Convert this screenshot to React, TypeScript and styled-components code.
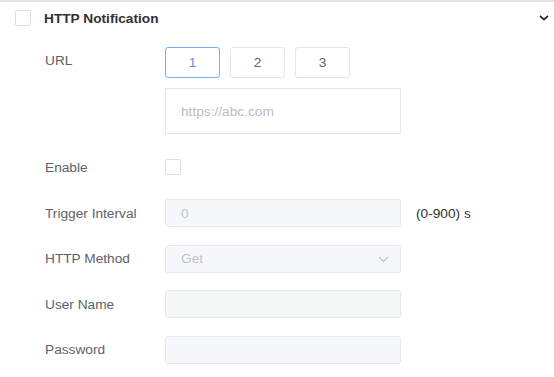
import styled, { createGlobalStyle } from 'styled-components';

const GlobalStyle = createGlobalStyle`
  html, body {
    margin: 0;
    padding: 0;
    background: #fff;
  }
  body {
    font-family: 'Liberation Sans', Arial, sans-serif;
    font-size: 13.7px;
    color: #606266;
  }
`;

const Panel = styled.section`
  width: 554px;
  border-top: 2px solid #e4e4e4;
  box-sizing: border-box;
`;

const Header = styled.div`
  display: flex;
  align-items: center;
  height: 34px;
  padding: 0 5px 0 15px;
  margin-top: -1px;
`;

const Box = styled.span<{ $size?: number }>`
  display: inline-block;
  width: ${(p) => p.$size ?? 15}px;
  height: ${(p) => p.$size ?? 15}px;
  border: 1px solid #dcdfe6;
  border-radius: 2px;
  background: #fff;
  box-sizing: border-box;
  flex-shrink: 0;
`;

const Title = styled.h3`
  flex: 1;
  margin: 0 0 0 13px;
  font-size: 13.7px;
  font-weight: bold;
  color: #303133;
`;

const Body = styled.div`
  display: flex;
  flex-direction: column;
  padding: 12px 0 0 45px;
`;

const Row = styled.div<{ $top?: boolean; $mb?: number }>`
  display: grid;
  grid-template-columns: 105px 236px auto;
  column-gap: 15px;
  align-items: ${(p) => (p.$top ? 'start' : 'center')};
  margin-bottom: ${(p) => p.$mb ?? 17.5}px;
`;

const Label = styled.label<{ $pt?: number }>`
  font-size: 13.7px;
  color: #606266;
  padding-top: ${(p) => p.$pt ?? 0}px;
`;

const Field = styled.div`
  display: flex;
  flex-direction: column;
  gap: 10px;
`;

const Tabs = styled.div`
  display: flex;
  gap: 10px;
`;

const Tab = styled.button<{ $active?: boolean }>`
  width: 55px;
  height: 31px;
  padding: 0;
  border: 1px solid ${(p) => (p.$active ? '#79aef0' : '#e4e6eb')};
  border-radius: 3px;
  background: #fff;
  color: ${(p) => (p.$active ? '#5c8fe0' : '#606266')};
  font-family: inherit;
  font-size: 13.7px;
`;

const UrlBox = styled.div`
  height: 46px;
  border: 1px solid #e4e6eb;
  box-sizing: border-box;
  display: flex;
  align-items: center;
  padding-left: 15px;
  color: #b8bcc4;
  font-size: 13.7px;
`;

const Input = styled.div`
  position: relative;
  height: 28px;
  box-sizing: border-box;
  border: 1px solid #e4e7ed;
  border-radius: 3px;
  background: #f5f7fa;
  display: flex;
  align-items: center;
  padding-left: 15px;
  color: #c0c4cc;
  font-size: 13.7px;
`;

const Caret = styled.svg`
  position: absolute;
  right: 11px;
  top: 10px;
`;

const Unit = styled.span`
  color: #303133;
  font-size: 13.7px;
`;

export default function App() {
  return (
    <>
      <GlobalStyle />
      <Panel>
        <Header>
          <Box $size={16} />
          <Title>HTTP Notification</Title>
          <svg width="10" height="6" viewBox="0 0 10 6">
            <path d="M1 1l4 3.5L9 1" fill="none" stroke="#303133" strokeWidth="1.8" />
          </svg>
        </Header>
        <Body>
          <Row $top $mb={25}>
            <Label $pt={6}>URL</Label>
            <Field>
              <Tabs>
                <Tab $active>1</Tab>
                <Tab>2</Tab>
                <Tab>3</Tab>
              </Tabs>
              <UrlBox>https://abc.com</UrlBox>
            </Field>
          </Row>
          <Row $mb={24}>
            <Label>Enable</Label>
            <Box $size={16} />
          </Row>
          <Row>
            <Label>Trigger Interval</Label>
            <Input>0</Input>
            <Unit>(0-900) s</Unit>
          </Row>
          <Row>
            <Label>HTTP Method</Label>
            <Input>
              Get
              <Caret width="11" height="7" viewBox="0 0 11 7">
                <path d="M1 1l4.5 4.5L10 1" fill="none" stroke="#c0c4cc" strokeWidth="1.3" />
              </Caret>
            </Input>
          </Row>
          <Row>
            <Label>User Name</Label>
            <Input />
          </Row>
          <Row>
            <Label>Password</Label>
            <Input />
          </Row>
        </Body>
      </Panel>
    </>
  );
}
